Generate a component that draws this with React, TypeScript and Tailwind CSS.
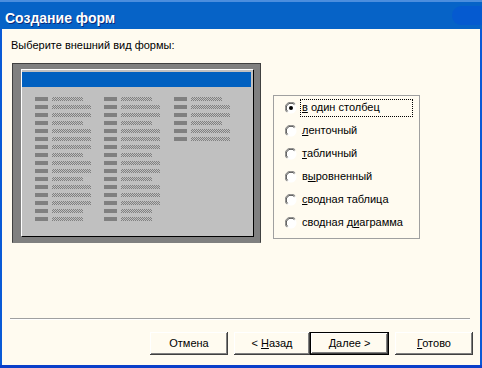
import React from "react";

const col = [0, 1, 1, 0, 1, 1, 1, 0, 1, 1, 0, 1, 1, 1, 0, 0];
const col3 = [0, 1, 1, 0, 1, 1];

const Column: React.FC<{ rows: number[]; wide?: boolean }> = ({ rows, wide }) => (
  <div className={`flex flex-col gap-[4px] ${wide ? "w-[70px]" : "w-[69px]"}`}>
    {rows.map((r, i) => (
      <div key={i} className="flex h-[4px] gap-[4px]">
        <div className="w-[13px] bg-[#808080]" />
        <div
          className={`${r ? "w-[39px]" : "w-[31px]"} bg-[repeating-conic-gradient(#808080_0%_25%,#c0c0c0_0%_50%)] bg-[length:2px_2px]`}
        />
      </div>
    ))}
  </div>
);

const Radio: React.FC<{ checked?: boolean }> = ({ checked }) => (
  <svg width="12" height="12" viewBox="0 0 12 12" className="shrink-0">
    <circle cx="6" cy="6" r="5.5" fill="#ffffff" />
    <path d="M10.2 1.8 A5.9 5.9 0 0 0 1.8 10.2" stroke="#808080" strokeWidth="1" fill="none" />
    <path d="M9.4 2.6 A4.8 4.8 0 0 0 2.6 9.4" stroke="#404040" strokeWidth="1" fill="none" />
    {checked && <circle cx="6" cy="6" r="2" fill="#000000" />}
  </svg>
);

const options: { pre: string; u: string; post: string }[] = [
  { pre: "", u: "в", post: " один столбец" },
  { pre: "", u: "л", post: "енточный" },
  { pre: "", u: "т", post: "абличный" },
  { pre: "в", u: "ы", post: "ровненный" },
  { pre: "", u: "с", post: "водная таблица" },
  { pre: "сводная д", u: "и", post: "аграмма" },
];

const btn =
  "flex h-[23px] items-center justify-center bg-[#fffbf0] text-[11px] text-black shadow-[inset_-1px_-1px_#404040,inset_1px_1px_#ffffff,inset_-2px_-2px_#808080]";

export default function App() {
  return (
    <div className="flex h-[368px] w-[482px] flex-col overflow-hidden font-['Liberation_Sans',Arial,sans-serif] text-black">
      {/* title bar */}
      <div className="relative flex h-[29px] shrink-0 flex-col bg-[#0663c7]">
        <div className="h-[2px] bg-[#4b8ede]" />
        <div className="pl-[5px] pt-[8px] text-[14px] font-bold leading-[16px] text-white [text-shadow:1px_1px_#0c2a78]">
          Создание форм
        </div>
        <div className="absolute right-0 top-[6px] h-[19px] w-[30px] rounded-l-full bg-[#055ad0]" />
      </div>

      {/* body */}
      <div className="flex flex-1 flex-col border-x-2 border-[#0a5ad6] bg-[#fffbf0]">
        <div className="ml-[9px] mt-[10px] text-[11px] leading-[13px]">Выберите внешний вид формы:</div>

        <div className="ml-[10px] mt-[11px] flex items-start gap-[12px]">
          {/* preview */}
          <div className="h-[180px] w-[249px] border border-[#404040] border-b-[#808080] bg-[#808080] pl-[8px] pr-[6px] pt-[5px]">
            <div className="flex h-[168px] flex-col border border-white border-b-black border-r-black bg-[#c0c0c0] pr-[2px] pt-[2px]">
              <div className="h-[15px] bg-[#0060c0]" />
              <div className="ml-[13px] mt-[10px] flex">
                <Column rows={col} />
                <Column rows={col} wide />
                <Column rows={col3} />
              </div>
            </div>
          </div>

          {/* options */}
          <div className="mt-[32px] flex h-[144px] w-[147px] flex-col border border-[#a0a0a0] text-[11px]">
            {options.map((o, i) => (
              <div key={i} className="flex h-[23px] items-center">
                <div className="ml-[11px]">
                  <Radio checked={i === 0} />
                </div>
                <div
                  className={`ml-[3px] flex h-[18px] items-center border px-[1px] leading-[13px] ${
                    i === 0 ? "w-[113px] border-dotted border-black" : "border-transparent"
                  }`}
                >
                  <span className="whitespace-pre">
                    {o.pre}
                    <u>{o.u}</u>
                    {o.post}
                  </span>
                </div>
              </div>
            ))}
          </div>
        </div>

        <div className="ml-[8px] mr-[10px] mt-[75px] border-b border-t border-b-white border-t-[#a0a0a0]" />

        <div className="mr-[7px] mt-[12px] flex justify-end">
          <button className={`${btn} w-[78px]`}>Отмена</button>
          <button className={`${btn} ml-[6px] w-[76px]`}>
            <span className="whitespace-pre">
              {"< "}
              <u>Н</u>азад
            </span>
          </button>
          <button className={`${btn} w-[79px] border border-black`}>
            <span className="whitespace-pre">
              <u>Д</u>
              {"алее >"}
            </span>
          </button>
          <button className={`${btn} ml-[6px] w-[78px]`}>
            <span>
              <u>Г</u>отово
            </span>
          </button>
        </div>
      </div>
      <div className="h-[3px] shrink-0 bg-[#0b3fc9]" />
    </div>
  );
}
